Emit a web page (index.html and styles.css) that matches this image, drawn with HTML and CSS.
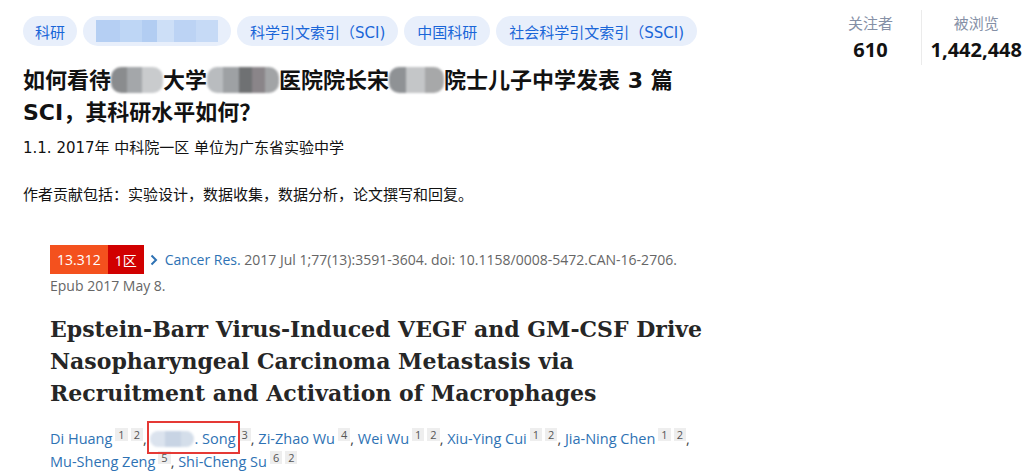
FILE: index.html
```html
<!doctype html>
<html lang="zh-CN">
  <head>
    <meta charset="UTF-8" />
    <meta name="viewport" content="width=device-width, initial-scale=1.0" />
    <title>问题</title>
    <link rel="stylesheet" href="styles.css">
  </head>
  <body>
    <div class="question-header">
      <div class="question-main">
        <div class="topic-tags">
          <a class="tag">科研</a>
          <a class="tag"><span class="mosaic mosaic-tag"></span></a>
          <a class="tag">科学引文索引（SCI)</a>
          <a class="tag">中国科研</a>
          <a class="tag">社会科学引文索引（SSCI)</a>
        </div>

        <h1 class="question-title">如何看待<span class="blur blur-a"></span>大学<span class="blur blur-b"></span>医院院长宋<span class="blur blur-c"></span>院士儿子中学发表 3 篇 SCI，其科研水平如何？</h1>

        <div class="rich-text">
          <p>1.1. 2017年 中科院一区 单位为广东省实验中学</p>
          <p>作者贡献包括：实验设计，数据收集，数据分析，论文撰写和回复。</p>
        </div>

        <figure class="shot">
          <div class="cite cite-row">
            <span class="badge"><span class="badge-if">13.312</span><span class="badge-zone">1区</span></span>
            <svg class="cite-arrow" width="8" height="12" viewBox="0 0 8 12"><path d="M1.5 1.5 L6 6 L1.5 10.5" fill="none" stroke="#2e72b4" stroke-width="2"/></svg>
            <span><span class="cite-journal">Cancer Res.</span> 2017 Jul 1;77(13):3591-3604. doi: 10.1158/0008-5472.CAN-16-2706.</span>
          </div>
          <div class="cite cite-epub">Epub 2017 May 8.</div>

          <h2 class="paper-title">Epstein-Barr Virus-Induced VEGF and GM-CSF Drive Nasopharyngeal Carcinoma Metastasis via Recruitment and Activation of Macrophages</h2>

          <div class="authors">
            <span class="author"><a>Di Huang</a><sup>1</sup><sup>2</sup></span>,
            <span class="author marked"><span class="blur blur-name"></span><a>. Song</a></span><sup>3</sup>,
            <span class="author"><a>Zi-Zhao Wu</a><sup>4</sup></span>,
            <span class="author"><a>Wei Wu</a><sup>1</sup><sup>2</sup></span>,
            <span class="author"><a>Xiu-Ying Cui</a><sup>1</sup><sup>2</sup></span>,
            <span class="author"><a>Jia-Ning Chen</a><sup>1</sup><sup>2</sup></span>,
            <span class="author"><a>Mu-Sheng Zeng</a><sup>5</sup></span>,
            <span class="author"><a>Shi-Cheng Su</a><sup>6</sup><sup>2</sup></span>
          </div>
        </figure>
      </div>

      <div class="number-board">
        <div class="stat">
          <div class="stat-name">关注者</div>
          <strong class="stat-value">610</strong>
        </div>
        <div class="stat">
          <div class="stat-name">被浏览</div>
          <strong class="stat-value">1,442,448</strong>
        </div>
      </div>
    </div>
  </body>
</html>
```

FILE: styles.css
```css
body{
  margin: 0;
  padding: 0;
  background: #ffffff;
  color: #121212;
  font-family: "DejaVu Sans", "Noto Sans CJK SC", sans-serif;
}

.question-header{
  display: flex;
  justify-content: space-between;
  padding: 16px 9px 0 23px;
}

.question-main{
  width: 690px;
}

/* topic tags */
.topic-tags{
  display: flex;
  gap: 6px;
}

.tag{
  flex-shrink: 0;
  display: inline-flex;
  align-items: center;
  height: 30px;
  padding: 0 13px;
  border-radius: 100px;
  background-color: #e8effb;
  color: #1a66d8;
  font-size: 15px;
  white-space: nowrap;
}

.tag:first-child{
  padding: 0 12px;
}

.mosaic-tag{
  display: inline-block;
  width: 122px;
  height: 22px;
  background: linear-gradient(90deg, #b5cff3 0 20%, #bed6f5 20% 38%, #b2cdf2 38% 50%, #cddff7 50% 64%, #bcd3f4 64% 82%, #c6daf6 82% 100%);
  filter: blur(0.6px);
}

/* title */
.question-title{
  margin: 19px 0 0;
  font-size: 22px;
  line-height: 32px;
  font-weight: 700;
}

.blur{
  display: inline-block;
  height: 26px;
  vertical-align: -5px;
  border-radius: 10px;
  filter: blur(1.2px);
}

.blur-a{
  width: 52px;
  background: linear-gradient(90deg, #8a8c8e 0 30%, #a4a7aa 30% 60%, #c9cbcd 60% 100%);
}

.blur-b{
  width: 72px;
  background: linear-gradient(90deg, #b9bcbf 0 22%, #9ea1a4 22% 45%, #6f7173 45% 62%, #8a8589 62% 80%, #a2a4a6 80% 100%);
}

.blur-c{
  width: 55px;
  background: linear-gradient(90deg, #8f9295 0 30%, #c4c6c8 30% 65%, #a7a8a9 65% 100%);
}

/* question detail */
.rich-text{
  margin-top: 7px;
  font-size: 15px;
  line-height: 24px;
}

.rich-text p{
  margin: 0 0 23px;
}

.rich-text p:last-child{
  margin-bottom: 0;
}

/* pubmed screenshot */
.shot{
  margin: 0;
  padding: 38px 0 0 27px;
  font-family: "Open Sans", "Noto Sans CJK SC", sans-serif;
}

.cite{
  font-size: 14px;
  color: #666666;
}

.cite-row{
  display: flex;
  align-items: center;
  height: 29px;
  white-space: nowrap;
}

.cite-epub{
  margin-top: 2px;
  line-height: 20px;
}

.badge{
  display: flex;
  height: 29px;
  margin-right: 6px;
  color: #ffffff;
}

.badge-if,
.badge-zone{
  display: flex;
  align-items: center;
  padding: 0 7px;
}

.badge-if{
  background-color: #f4511e;
}

.badge-zone{
  background-color: #d10000;
}

.cite-arrow{
  margin-right: 7px;
}

.cite-journal{
  color: #2e72b4;
}

.paper-title{
  max-width: 660px;
  margin: 17px 0 0;
  font-family: "DejaVu Serif", serif;
  font-size: 22px;
  line-height: 32px;
  font-weight: 700;
  color: #262626;
}

.authors{
  margin-top: 18px;
  font-size: 14.5px;
  line-height: 23px;
  color: #444444;
}

.author{
  white-space: nowrap;
}

.authors a{
  color: #2e72b4;
}

.authors sup{
  display: inline-block;
  margin-left: 3px;
  padding: 0 3px;
  background-color: #eeeeee;
  color: #555555;
  font-size: 11px;
  line-height: 13px;
  vertical-align: 5px;
}

/* red annotation box drawn over the screenshot */
.marked{
  position: relative;
}

.marked::after{
  content: "";
  position: absolute;
  left: -3px;
  right: -4px;
  top: -8px;
  bottom: -6px;
  border: 2px solid #e53935;
}

.blur-name{
  width: 44px;
  height: 16px;
  vertical-align: -3px;
  background: linear-gradient(90deg, #dbe3ee 0 35%, #c8d4e4 35% 70%, #d4deea 70% 100%);
}

/* follower / view counts */
.number-board{
  display: flex;
  margin-top: -6px;
  height: 55px;
  font-family: "Noto Sans", "Noto Sans CJK SC", sans-serif;
}

.stat{
  display: flex;
  flex-direction: column;
  align-items: center;
  padding-top: 1px;
}

.stat:first-child{
  width: 100px;
  border-right: 1px solid #ebebeb;
}

.stat:last-child{
  padding-left: 9px;
}

.stat-name{
  font-size: 15px;
  line-height: 24px;
  color: #8590a6;
}

.stat-value{
  font-size: 20px;
  line-height: 30px;
  font-weight: 700;
  color: #121212;
}
```
